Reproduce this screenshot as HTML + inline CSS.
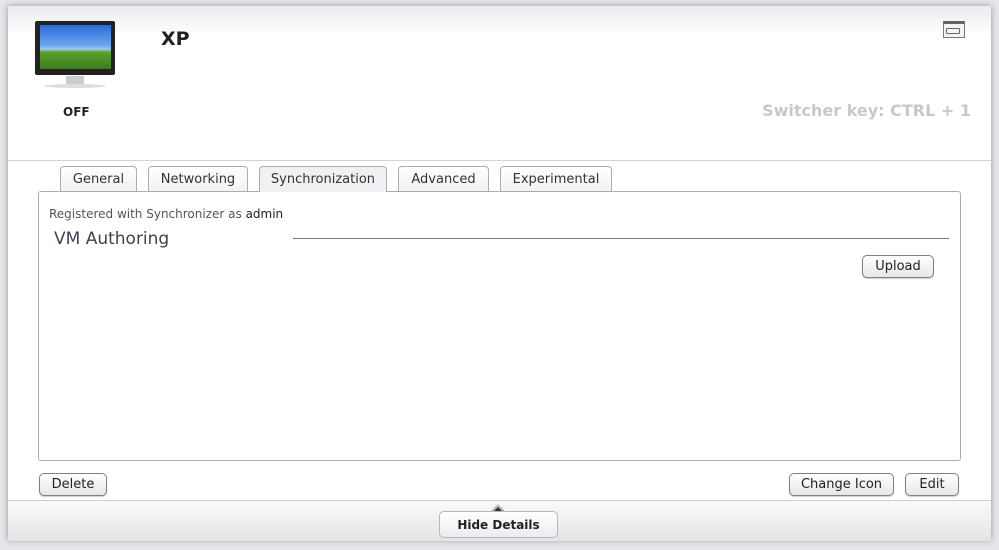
<!DOCTYPE html><html><head><style>
body{margin:0;width:999px;height:550px;background:#e4e6ea;font-family:"DejaVu Sans","Liberation Sans",sans-serif;position:relative;overflow:hidden}
.panel{position:absolute;left:8px;top:6px;width:983px;height:534px;background:#fff;box-shadow:0 0 6px rgba(0,0,0,.35);}
.a{position:absolute}
.tab{position:absolute;top:166px;height:24px;border:1px solid #a9adb3;border-bottom:none;border-radius:4px 4px 0 0;background:linear-gradient(#fff,#f1f2f4);font-size:13px;color:#333;text-align:center;line-height:25px}
.btn{position:absolute;height:21px;border:1px solid #7d8186;border-radius:5px;background:linear-gradient(#fff,#e6e7e9);font-size:13px;color:#222;text-align:center;line-height:21px;box-shadow:0 1px 1px rgba(0,0,0,.2)}
</style></head><body>
<div class="panel"></div>
<div class="a" style="left:8px;top:6px;width:983px;height:30px;background:linear-gradient(#e9ebee,#fff)"></div>
<!-- monitor -->
<div class="a" style="left:35px;top:21px;width:80px;height:54px;background:#222;border-radius:2px"></div>
<div class="a" style="left:40px;top:25px;width:71px;height:44px;background:linear-gradient(#2a6ad8 0%,#6aa3ee 45%,#9fc5f0 55%,#5aa02a 62%,#3d7d1a 100%)"></div>
<div class="a" style="left:66px;top:76px;width:18px;height:8px;background:#c8cbd0"></div>
<div class="a" style="left:44px;top:84px;width:62px;height:4px;background:#ddd;border-radius:50%"></div>
<div class="a" style="left:63px;top:105px;font-size:12px;font-weight:bold;color:#222">OFF</div>
<div class="a" style="left:161px;top:28px;font-size:19px;font-weight:bold;color:#222">XP</div>
<div class="a" style="left:943px;top:21px;width:22px;height:17px;border:1px solid #777;border-top:3px solid #666;box-sizing:border-box;background:#f4f4f4"></div>
<div class="a" style="left:946px;top:28px;width:14px;height:6px;border:1px solid #666;border-radius:1px;box-sizing:border-box"></div>
<div class="a" style="right:28px;top:101px;font-size:16px;font-weight:bold;color:#c8c8c8">Switcher key: CTRL + 1</div>
<div class="a" style="left:8px;top:160px;width:983px;height:1px;background:#cfd4db"></div>
<div class="tab" style="left:60px;width:75px">General</div>
<div class="tab" style="left:148px;width:98px">Networking</div>
<div class="tab" style="left:259px;width:126px;background:#f0f1f3;height:25px;z-index:2">Synchronization</div>
<div class="tab" style="left:398px;width:89px">Advanced</div>
<div class="tab" style="left:500px;width:110px">Experimental</div>
<div class="a" style="left:38px;top:191px;width:921px;height:268px;border:1px solid #a9adb3;border-radius:3px;background:#fff"></div>
<div class="a" style="left:49px;top:207px;font-size:12px;color:#555">Registered with Synchronizer as <span style="color:#222">admin</span></div>
<div class="a" style="left:54px;top:229px;font-size:17px;color:#3b4450">VM Authoring</div>
<div class="a" style="left:293px;top:238px;width:656px;height:1px;background:#777"></div>
<div class="btn" style="left:862px;top:255px;width:70px">Upload</div>
<div class="btn" style="left:39px;top:473px;width:66px">Delete</div>
<div class="btn" style="left:789px;top:473px;width:103px">Change Icon</div>
<div class="btn" style="left:905px;top:473px;width:52px">Edit</div>
<div class="a" style="left:8px;top:500px;width:983px;height:40px;background:linear-gradient(#fafafa,#e3e4e6);border-top:1px solid #c9ccd1"></div>
<div class="a" style="left:439px;top:511px;width:117px;height:25px;border:1px solid #b5b8bd;border-radius:5px;background:linear-gradient(#fff,#ececee);font-size:12px;font-weight:bold;color:#222;text-align:center;line-height:27px">Hide Details</div>
<div class="a" style="left:491px;top:504px;width:0;height:0;border-left:7px solid transparent;border-right:7px solid transparent;border-bottom:7px solid #bbb"></div>
<div class="a" style="left:494px;top:507px;width:0;height:0;border-left:4px solid transparent;border-right:4px solid transparent;border-bottom:4px solid #333"></div>
</body></html>
